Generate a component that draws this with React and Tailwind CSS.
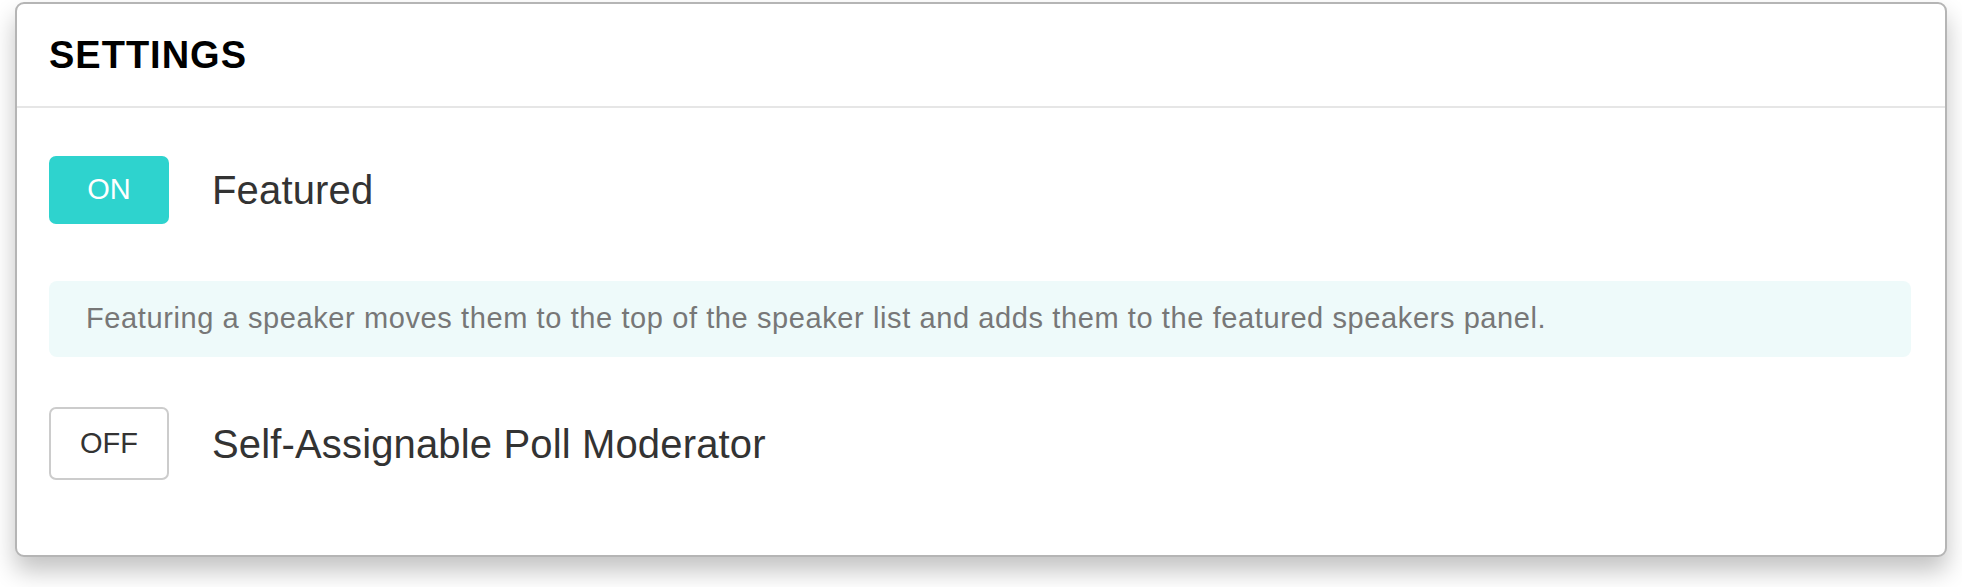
import React from "react";

function Toggle({ on }) {
  return on ? (
    <div className="w-[120px] h-[68px] rounded-[7px] bg-[#2ed3ce] flex items-center justify-center text-white text-[29px]">
      ON
    </div>
  ) : (
    <div className="w-[120px] h-[73px] rounded-[7px] border-2 border-[#cccccc] bg-white flex items-center justify-center text-[#333333] text-[29px]">
      OFF
    </div>
  );
}

function SettingRow({ on, label }) {
  return (
    <div className="flex items-center">
      <Toggle on={on} />
      <span className="ml-[43px] text-[40px] text-[#333333] leading-none tracking-[0.15px]">{label}</span>
    </div>
  );
}

export default function App() {
  return (
    <div
      className="w-[1962px] h-[587px] bg-white pt-[2px] px-[15px]"
      style={{ fontFamily: '"Liberation Sans", Arial, sans-serif' }}
    >
      <div className="border-2 border-[#b5b5b5] rounded-[9px] bg-white shadow-[0_14px_24px_rgba(0,0,0,0.24)] h-[555px]">
        {/* Header */}
        <div className="h-[104px] flex items-center px-[32px] border-b-2 border-[#e6e6e6]">
          <h1 className="text-[38px] font-bold text-black tracking-[1px] leading-none">SETTINGS</h1>
        </div>

        <div className="px-[32px] pr-[34px]">
          <div className="mt-[48px]">
            <SettingRow on label="Featured" />
          </div>

          <div className="mt-[57px] h-[76px] rounded-[8px] bg-[#eefafa] flex items-center px-[37px] text-[29px] tracking-[0.6px] text-[#777777]">
            Featuring a speaker moves them to the top of the speaker list and adds them to the featured speakers panel.
          </div>

          <div className="mt-[50px]">
            <SettingRow on={false} label="Self-Assignable Poll Moderator" />
          </div>
        </div>
      </div>
    </div>
  );
}
